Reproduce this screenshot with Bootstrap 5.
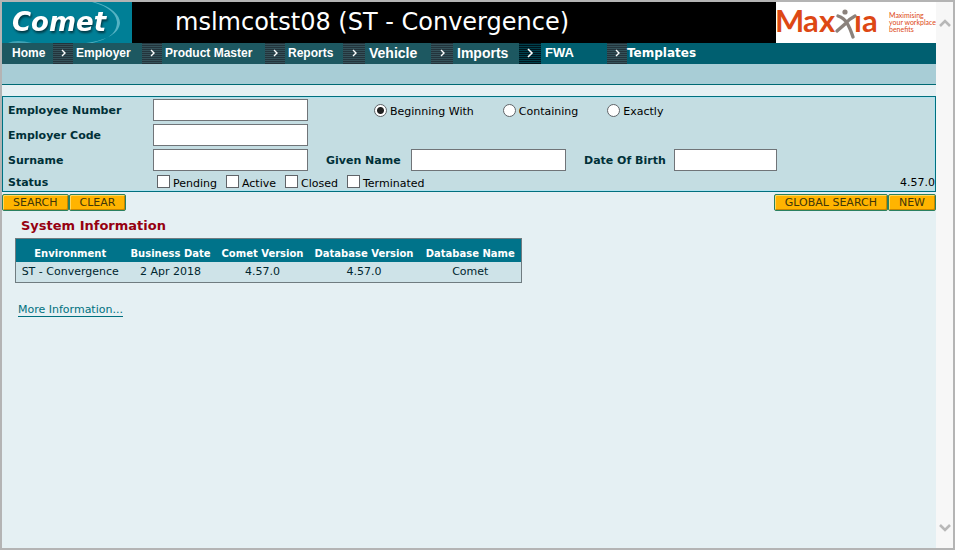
<!DOCTYPE html>
<html lang="en">
<head>
<meta charset="utf-8">
<meta name="viewport" content="width=device-width, initial-scale=1">
<title>Comet</title>
<link rel="stylesheet" href="https://cdn.jsdelivr.net/npm/bootstrap@5.3.0/dist/css/bootstrap.min.css">
<style>
  body { font-family: "DejaVu Sans", Verdana, sans-serif; font-size: 11px; line-height: 14px; color: #00262e; background: #e5f0f3; }
  .frame { border: 2px solid #b4b4b4; }
  .masthead { height: 41px; background: #000; }
  .comet-logo { width: 130px; background: #007f96; }
  .comet-logo text { filter: drop-shadow(1px 2px 1px #003844); }
  .masthead h1 { font-size: 24px; line-height: 41px; padding-left: 43px; }
  .maxxia-logo { width: 160px; background: #fff; }
  .main-nav { height: 21px; background: #005f70; font-family: "Liberation Sans", Arial, sans-serif; font-weight: bold; font-size: 12px; line-height: 21px; }
  .main-nav a { color: #fff; text-decoration: none; }
  .main-nav li { background: #1d5861; white-space: nowrap; }
  .main-nav .new-item { background: #005f70; }
  .w-home { width: 51px; padding-left: 10px; }
  .w-employer { width: 89px; }
  .w-product { width: 123px; }
  .w-reports { width: 78px; }
  .w-vehicle { width: 88px; }
  .arrow { width: 20px; height: 21px; margin-right: 3px; flex-shrink: 0; background: repeating-linear-gradient(#23343c 0 1px, #34525a 1px 2px); }
  .arrow-wide { width: 22px; margin-right: 4px; }
  .arrow-dark { background: repeating-linear-gradient(#00141c 0 1px, #00404c 1px 2px); }
  .nav-large { font-size: 14px; }
  .nav-sans { font-size: 13px; line-height: 20px; }
  .nav-tahoma { font-family: "DejaVu Sans", Verdana, sans-serif; font-size: 12px; }
  .subbar { height: 21px; background: #a8cdd6; border-bottom: 1px solid #006a74; margin-bottom: 11px; }
  .search-panel { background: #c4dde2; border: 1px solid #00707f; box-shadow: inset 0 0 0 1px #b0e2ee; padding: 2px 0 0 5px; gap: 3px; }
  .field-label { font-weight: bold; color: #003038; padding-top: 2px; }
  .first-label { width: 145px; }
  .given-label { width: 85px; margin-left: 18px; }
  .dob-label { width: 90px; margin-left: 18px; }
  .text-field { width: 155px; height: 22px; border: 1px solid #707478; background: #fff; padding: 0 3px; }
  .date-field { width: 103px; }
  .radio-set { margin-left: 66px; gap: 29px; }
  .pick { gap: 3px; color: #000; }
  .pick span { padding-top: 3px; }
  .pick input { appearance: none; width: 13px; height: 13px; margin: 0; background: #fff; border: 1px solid #606468; }
  .pick input[type=radio] { border-radius: 50%; }
  .pick input[type=radio]:checked { background: radial-gradient(circle, #222 0 3px, #fff 4px); }
  .status-set { margin-left: 4px; gap: 9px; }
  .status-set input { margin-bottom: 2px; }
  .version { color: #000; }
  .gold-btn { height: 17px; border: 1px solid #2a8060; border-radius: 2px; background: #ffb400; box-shadow: inset 1px 1px 0 #ffd860, inset -1px -1px 0 #c98600; font-size: 11px; line-height: 13px; color: #40360a; padding: 0 10px; }
  .action-bar { padding-top: 2px; }
  .section-title { font-size: 13px; line-height: 16px; font-weight: bold; color: #960010; margin: 7px 0 4px 19px; }
  .info-table { width: auto; margin-left: 13px; border: 1px solid #707c80; text-align: center; border-collapse: collapse; }
  .info-table th { background: #00738a; color: #fff; font-size: 10px; padding: 8px 0 1px; white-space: nowrap; }
  .info-table td { background: #cee3e8; padding: 3px 0; white-space: nowrap; }
  .c-env { width: 109px; }
  .c-date, .c-ver { width: 92px; }
  .c-dbver { width: 111px; }
  .c-dbname { width: 102px; }
  .more-link { margin: 20px 0 0 16px; color: #00707f; text-decoration: none; border-bottom: 1px solid #00707f; line-height: 13px; }
  .scroll-rail { width: 17px; background: #f7f7f7; padding: 14px 0; }
  .scroll-rail button { border: 0; background: none; padding: 0; line-height: 0; }
</style>
</head>
<body>
<div class="frame d-flex min-vh-100">
  <div class="flex-grow-1">
    <header class="masthead d-flex">
      <svg class="comet-logo flex-shrink-0" width="130" height="41" viewBox="0 0 130 41" role="img" aria-label="Comet">
        <path d="M93 0C110 5 118 13 118 21C117 31 106 38 84 41H90C108 37 115 30 115 20C114 12 108 5 90 0Z" fill="#55b3c4"/>
        <path d="M6 41Q14 37 30 41Z" fill="#3fa3b6"/>
        <text x="10" y="29" font-family="DejaVu Sans, sans-serif" font-size="26" font-weight="bold" font-style="italic" fill="#fff">Comet</text>
      </svg>
      <h1 class="flex-grow-1 mb-0 fw-normal text-white text-nowrap">mslmcotst08 (ST - Convergence)</h1>
      <svg class="maxxia-logo flex-shrink-0" width="160" height="41" viewBox="0 0 160 41" role="img" aria-label="Maxxia">
        <g font-family="Lato, sans-serif" font-size="31" font-weight="bold" fill="#dd4814">
          <text x="-1" y="30">M</text><text x="27" y="30">a</text><text x="43" y="30">x</text><text x="78" y="30">ı</text><text x="86" y="30">a</text>
        </g>
        <path d="M62 14Q68 16 71 21T77 35M79 14Q73 17 69 22L61 29" fill="none" stroke="#8b827c" stroke-width="3.4" stroke-linecap="round"/>
        <circle cx="69" cy="10" r="2.6" fill="#8b827c"/>
        <g font-family="Lato, sans-serif" font-size="7" fill="#dd4814">
          <text x="113" y="16">Maximising</text><text x="113" y="23">your workplace</text><text x="113" y="30">benefits</text>
        </g>
      </svg>
    </header>
    <nav class="main-nav">
      <ul class="list-unstyled d-flex mb-0">
        <li class="w-home"><a href="#">Home</a></li>
        <li class="w-employer d-flex"><svg class="arrow" viewBox="0 0 20 21"><path d="M9 7l3 3-3 3" fill="none" stroke="#fff" stroke-width="1.4"/></svg><a href="#">Employer</a></li>
        <li class="w-product d-flex"><svg class="arrow" viewBox="0 0 20 21"><path d="M9 7l3 3-3 3" fill="none" stroke="#fff" stroke-width="1.4"/></svg><a href="#">Product Master</a></li>
        <li class="w-reports d-flex"><svg class="arrow" viewBox="0 0 20 21"><path d="M9 7l3 3-3 3" fill="none" stroke="#fff" stroke-width="1.4"/></svg><a href="#">Reports</a></li>
        <li class="w-vehicle d-flex"><svg class="arrow arrow-wide" viewBox="0 0 22 21"><path d="M10 7l3 3-3 3" fill="none" stroke="#fff" stroke-width="1.4"/></svg><a href="#" class="nav-large">Vehicle</a></li>
        <li class="w-vehicle d-flex"><svg class="arrow arrow-wide" viewBox="0 0 22 21"><path d="M10 7l3 3-3 3" fill="none" stroke="#fff" stroke-width="1.4"/></svg><a href="#" class="nav-large">Imports</a></li>
        <li class="w-vehicle new-item d-flex"><svg class="arrow arrow-wide arrow-dark" viewBox="0 0 22 21"><path d="M9 6l4 4-4 4" fill="none" stroke="#fff" stroke-width="1.6"/></svg><a href="#" class="nav-sans">FWA</a></li>
        <li class="new-item d-flex"><svg class="arrow me-0" viewBox="0 0 20 21"><path d="M9 7l3 3-3 3" fill="none" stroke="#fff" stroke-width="1.4"/></svg><a href="#" class="nav-tahoma">Templates</a></li>
      </ul>
    </nav>
    <div class="subbar"></div>
    <form>
      <div class="search-panel d-flex flex-column">
        <div class="d-flex align-items-center">
          <label class="field-label first-label" for="empno">Employee Number</label>
          <input class="text-field" id="empno" type="text">
          <div class="radio-set d-flex">
            <label class="pick d-flex align-items-center"><input type="radio" name="match" checked><span>Beginning With</span></label>
            <label class="pick d-flex align-items-center"><input type="radio" name="match"><span>Containing</span></label>
            <label class="pick d-flex align-items-center"><input type="radio" name="match"><span>Exactly</span></label>
          </div>
        </div>
        <div class="d-flex align-items-center">
          <label class="field-label first-label" for="code">Employer Code</label>
          <input class="text-field" id="code" type="text">
        </div>
        <div class="d-flex align-items-center">
          <label class="field-label first-label" for="surname">Surname</label>
          <input class="text-field" id="surname" type="text">
          <label class="field-label given-label" for="given">Given Name</label>
          <input class="text-field" id="given" type="text">
          <label class="field-label dob-label" for="dob">Date Of Birth</label>
          <input class="text-field date-field" id="dob" type="text">
        </div>
        <div class="d-flex align-items-center">
          <span class="field-label first-label pt-0">Status</span>
          <div class="status-set d-flex">
            <label class="pick d-flex align-items-center"><input type="checkbox"><span>Pending</span></label>
            <label class="pick d-flex align-items-center"><input type="checkbox"><span>Active</span></label>
            <label class="pick d-flex align-items-center"><input type="checkbox"><span>Closed</span></label>
            <label class="pick d-flex align-items-center"><input type="checkbox"><span>Terminated</span></label>
          </div>
          <span class="version ms-auto">4.57.0</span>
        </div>
      </div>
      <div class="action-bar d-flex">
        <button type="button" class="gold-btn">SEARCH</button>
        <button type="button" class="gold-btn">CLEAR</button>
        <button type="button" class="gold-btn ms-auto">GLOBAL SEARCH</button>
        <button type="button" class="gold-btn">NEW</button>
      </div>
    </form>
    <main>
      <h2 class="section-title">System Information</h2>
      <table class="info-table">
        <thead><tr><th class="c-env">Environment</th><th class="c-date">Business Date</th><th class="c-ver">Comet Version</th><th class="c-dbver">Database Version</th><th class="c-dbname">Database Name</th></tr></thead>
        <tbody><tr><td>ST - Convergence</td><td>2 Apr 2018</td><td>4.57.0</td><td>4.57.0</td><td>Comet</td></tr></tbody>
      </table>
      <a href="#" class="more-link d-inline-block">More Information...</a>
    </main>
  </div>
  <div class="scroll-rail d-flex flex-column align-items-center justify-content-between">
    <button type="button" aria-label="Scroll up"><svg width="12" height="12" viewBox="0 0 12 12"><path d="M1 10l5-5 5 5" fill="none" stroke="#b8b8b8" stroke-width="2.6"/></svg></button>
    <button type="button" aria-label="Scroll down"><svg width="12" height="12" viewBox="0 0 12 12"><path d="M1 3l5 5 5-5" fill="none" stroke="#b8b8b8" stroke-width="2.6"/></svg></button>
  </div>
</div>
<script src="https://cdn.jsdelivr.net/npm/bootstrap@5.3.0/dist/js/bootstrap.bundle.min.js"></script>
</body>
</html>
